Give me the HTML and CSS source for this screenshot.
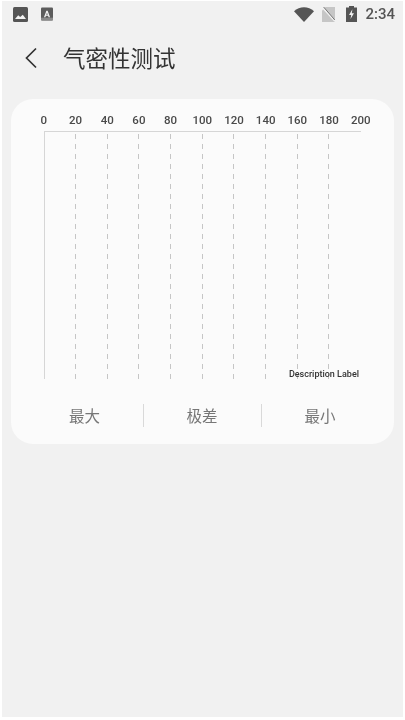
FILE: index.html
```html
<!DOCTYPE html>
<html lang="zh">
<head>
<meta charset="utf-8">
<title>气密性测试</title>
<link rel="stylesheet" href="styles.css">
</head>
<body>
<div class="screen">
  <div class="status">
    <div class="status-left">
      <svg class="ic-image" viewBox="0 0 15 15"><rect width="15" height="15" rx="1.5" fill="#555"/><path d="M2 12 L5.2 8.2 L7.2 10 L9.8 7.8 L13 12Z" fill="#f2f2f2"/></svg>
      <svg class="ic-a" viewBox="0 0 13 14"><rect width="13" height="14" rx="1.2" fill="#5c5c5c"/><rect y="11" width="13" height="3" fill="#8a8a8a"/><path d="M3.2 10.6 L5.8 3.4 H7.2 L9.8 10.6 H8.2 L7.7 9 H5.3 L4.8 10.6Z M5.7 7.9 H7.3 L6.5 5.6Z" fill="#f2f2f2" fill-rule="evenodd"/></svg>
    </div>
    <div class="status-right">
      <svg class="ic-wifi" viewBox="0 0 20 15"><path d="M0 4.2 C5.5 -1 14.5 -1 20 4.2 L10 15Z" fill="#555"/></svg>
      <svg class="ic-sim" viewBox="0 0 13 15"><path d="M3.5 0 H13 V15 H0 V3.5Z" fill="#c6c6c6"/><path d="M0.5 0.5 L13 14.2" stroke="#f2f2f2" stroke-width="1.6"/><path d="M1.6 0 L12.8 13" stroke="#777" stroke-width="1"/></svg>
      <svg class="ic-batt" viewBox="0 0 11 16"><path d="M3 0 H8 V1.5 H11 V16 H0 V1.5 H3Z" fill="#555"/><path d="M6.4 3.2 L3 9 H5.2 L4.5 13 L8 7.2 H5.8Z" fill="#f2f2f2"/></svg>
      <span class="clock">2:34</span>
    </div>
  </div>
  <div class="titlebar">
    <svg class="back" viewBox="0 0 14 22"><path d="M12 1.5 L2.5 11 L12 20.5" fill="none" stroke="#333" stroke-width="1.7"/></svg>
    <h1 class="title">气密性测试</h1>
  </div>
  <section class="card">
    <div class="labels">
      <span>0</span><span>20</span><span>40</span><span>60</span><span>80</span><span>100</span><span>120</span><span>140</span><span>160</span><span>180</span><span>200</span>
    </div>
    <div class="plot">
      <div class="cell"></div><div class="cell"></div><div class="cell"></div><div class="cell"></div><div class="cell"></div><div class="cell"></div><div class="cell"></div><div class="cell"></div><div class="cell"></div><div class="cell last"></div>
      <span class="desc">Description Label</span>
    </div>
    <div class="stats">
      <div class="stat">最大</div>
      <div class="stat">极差</div>
      <div class="stat">最小</div>
    </div>
  </section>
</div>
</body>
</html>
```
FILE: styles.css
```css
* { box-sizing: border-box; }
html, body { margin: 0; padding: 0; }
body { background: #fff; font-family: "Roboto", "Noto Sans CJK SC", sans-serif; }
.screen {
  width: 401px;
  height: 716px;
  margin: 1px 0 0 2px;
  background: #f1f1f1;
  overflow: hidden;
  filter: blur(0.4px);
}
.status {
  height: 26px;
  display: flex;
  justify-content: space-between;
  align-items: center;
  padding: 0 8px 0 11px;
}
.status-left, .status-right { display: flex; align-items: center; }
.ic-image { width: 15px; height: 15px; margin-right: 13px; }
.ic-a { width: 12px; height: 14px; }
.ic-wifi { width: 20px; height: 15px; margin-right: 8px; }
.ic-sim { width: 13px; height: 15px; margin-right: 11px; }
.ic-batt { width: 11px; height: 16px; margin-right: 8px; }
.clock { font-size: 15px; font-weight: 500; color: #555; line-height: 16px; }
.titlebar {
  height: 62px;
  display: flex;
  align-items: center;
  padding-left: 22px;
}
.back { width: 14px; height: 22px; margin-right: 25px; }
.title {
  margin: 0;
  font-size: 22.5px;
  font-weight: 400;
  color: #333;
  font-family: "Noto Sans CJK SC", sans-serif;
  position: relative;
  top: -1px;
}
.card {
  width: 383px;
  height: 344.5px;
  margin: 10px 0 0 9px;
  background: #fbfbfb;
  border-radius: 22px;
  padding-top: 13px;
}
.labels {
  display: flex;
  height: 18.5px;
  margin-left: 17px;
  color: #4a4a4a;
  font-weight: 500;
  font-size: 11.5px;
  line-height: 16px;
}
.labels span { width: 31.7px; text-align: center; }
.plot {
  position: relative;
  display: flex;
  width: 317.5px;
  height: 248.5px;
  margin-left: 32.5px;
  border-left: 1.5px solid #d6d6d6;
  border-top: 1.5px solid #d6d6d6;
}
.cell {
  width: 31.7px;
  height: 100%;
  margin-top: 2px;
  background: repeating-linear-gradient(to bottom, #c6c6c6 0 5px, transparent 5px 10px) right / 1px 100% no-repeat;
}
.cell.last { background: none; }
.desc {
  position: absolute;
  right: 2px;
  bottom: -1px;
  font-size: 9px;
  font-weight: 500;
  line-height: 12px;
  color: #333;
  font-family: "Roboto", sans-serif;
}
.stats {
  display: flex;
  align-items: center;
  margin: 25px 0 0 15.5px;
}
.stat {
  width: 118px;
  height: 23px;
  line-height: 23px;
  text-align: center;
  font-size: 15.5px;
  color: #777;
  font-family: "Noto Sans CJK SC", sans-serif;
}
.stat:first-child { width: 116px; }
.stat + .stat { border-left: 1px solid #d9d9d9; }
```
